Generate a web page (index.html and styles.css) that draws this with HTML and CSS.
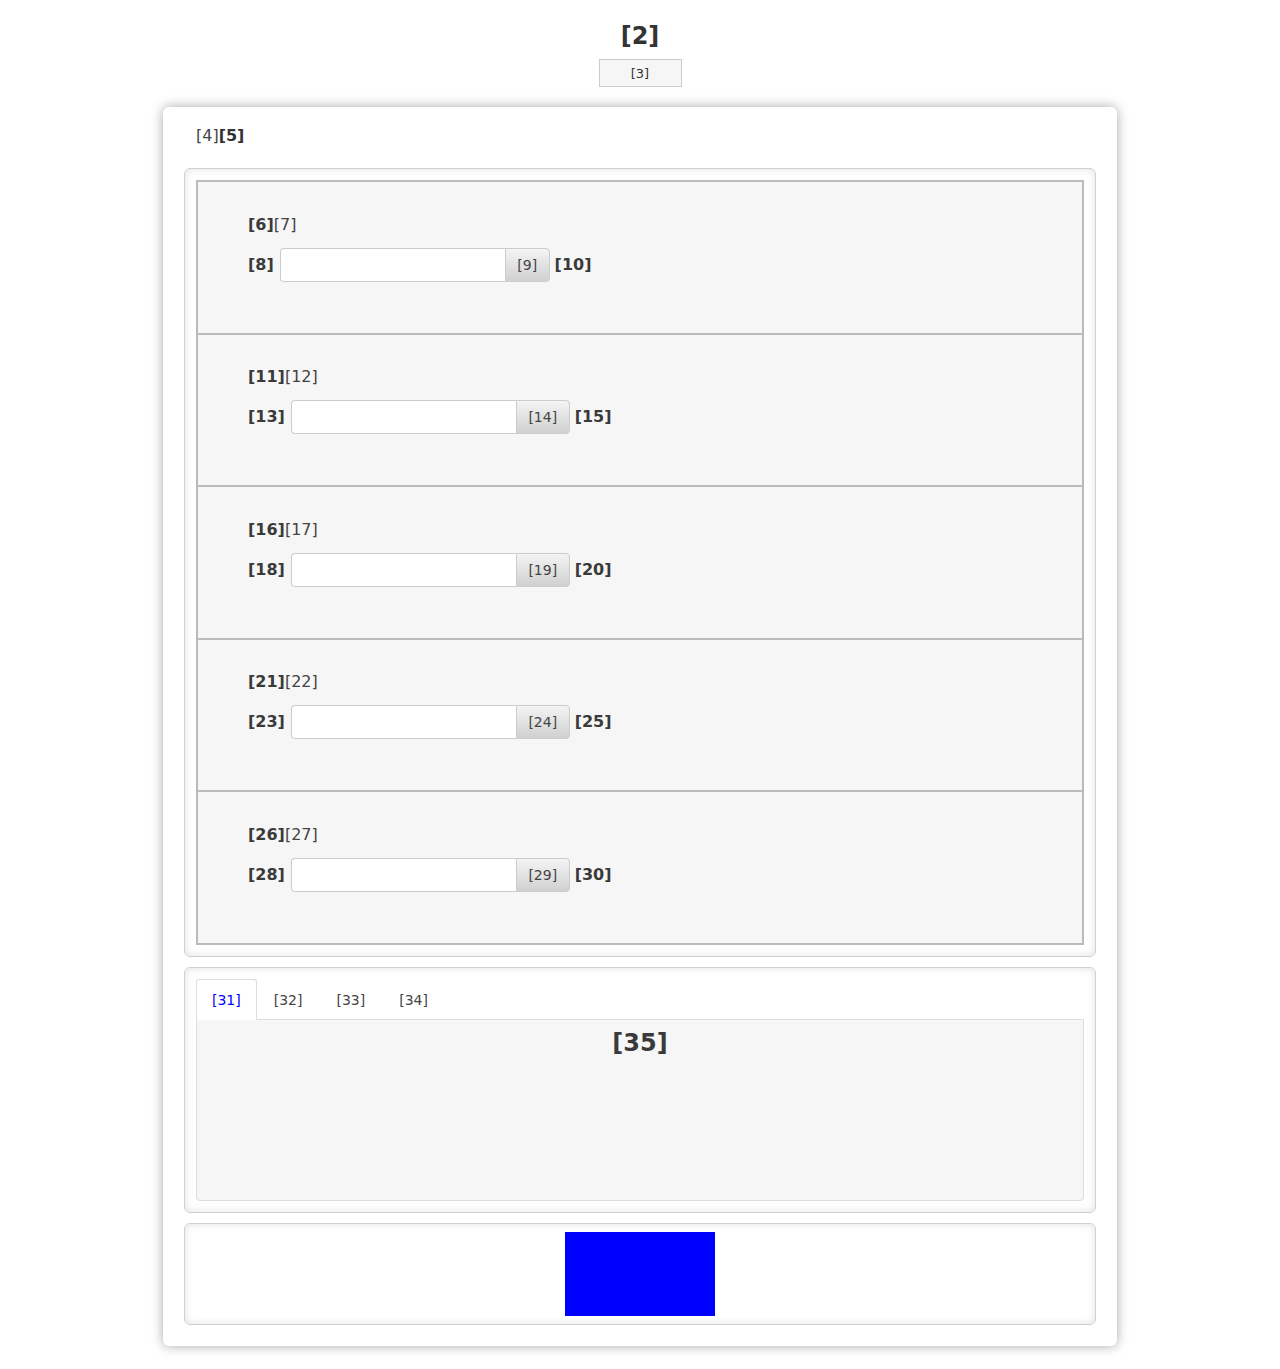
FILE: index.html
```html
<!DOCTYPE html>
<html>
<head>
<meta charset="utf-8">
<link rel="stylesheet" href="styles.css">
</head>
<body>
<header class="top">
  <h1 class="title">[2]</h1>
  <button class="top-btn">[3]</button>
</header>
<main class="card">
  <div class="card-head">[4]<b>[5]</b></div>

  <section class="box rows-box">
    <div class="rows">
      <div class="row">
        <div class="row-label"><b>[6]</b>[7]</div>
        <div class="field"><b>[8]</b><span class="group"><input class="inp" type="text"><button class="gbtn">[9]</button></span><b>[10]</b></div>
      </div>
      <div class="row">
        <div class="row-label"><b>[11]</b>[12]</div>
        <div class="field"><b>[13]</b><span class="group"><input class="inp" type="text"><button class="gbtn">[14]</button></span><b>[15]</b></div>
      </div>
      <div class="row">
        <div class="row-label"><b>[16]</b>[17]</div>
        <div class="field"><b>[18]</b><span class="group"><input class="inp" type="text"><button class="gbtn">[19]</button></span><b>[20]</b></div>
      </div>
      <div class="row">
        <div class="row-label"><b>[21]</b>[22]</div>
        <div class="field"><b>[23]</b><span class="group"><input class="inp" type="text"><button class="gbtn">[24]</button></span><b>[25]</b></div>
      </div>
      <div class="row">
        <div class="row-label"><b>[26]</b>[27]</div>
        <div class="field"><b>[28]</b><span class="group"><input class="inp" type="text"><button class="gbtn">[29]</button></span><b>[30]</b></div>
      </div>
    </div>
  </section>

  <section class="box tabs-box">
    <ul class="tabs">
      <li class="tab active">[31]</li>
      <li class="tab">[32]</li>
      <li class="tab">[33]</li>
      <li class="tab">[34]</li>
    </ul>
    <div class="panel">
      <h2 class="panel-title">[35]</h2>
    </div>
  </section>

  <section class="box media-box">
    <div class="blue"></div>
  </section>
</main>
</body>
</html>
```
FILE: styles.css
```css
* { box-sizing: border-box; }
html, body { margin: 0; padding: 0; background: #fff; }
body {
  font-family: "DejaVu Sans", "Liberation Sans", sans-serif;
  color: #333;
  font-size: 16px;
  padding-top: 22px;
  padding-bottom: 22px;
}
.top {
  display: flex;
  flex-direction: column;
  align-items: center;
}
.title {
  margin: 0;
  font-size: 24px;
  line-height: 28px;
  font-weight: bold;
}
.top-btn {
  margin-top: 9px;
  width: 83px;
  height: 28px;
  background: #f6f6f6;
  border: 1px solid #ccc;
  font-family: inherit;
  font-size: 13px;
  color: #333;
  padding: 0;
}
.card {
  width: 954px;
  margin: 20px auto 0;
  background: #fff;
  border-radius: 6px;
  box-shadow: 0 0 12px rgba(0,0,0,0.35);
  padding: 19px 21px 21px;
}
.card-head {
  padding: 0 12px;
  line-height: 20px;
  margin-bottom: 22px;
  color: #444;
}
.card-head b { color: #333; }
.box {
  border: 1px solid #d0d0d0;
  border-radius: 6px;
  background: #fff;
  box-shadow: inset 0 0 8px rgba(0,0,0,0.12);
  padding: 11px;
  margin-bottom: 10px;
}
.rows-box { padding-bottom: 11px; }
.rows {
  border: 2px solid #bbb;
  background: #f6f6f6;
}
.row {
  height: 152.5px;
  padding: 32.5px 50px 0;
  border-bottom: 2px solid #bbb;
  color: #444;
}
.row:last-child { border-bottom: 0; height: 150.5px; }
.row b { color: #3a3a3a; }
.row-label {
  line-height: 20px;
  height: 20px;
}
.field {
  margin-top: 13px;
  display: flex;
  align-items: center;
  gap: 6px;
  height: 34px;
  line-height: 20px;
}
.field > b:last-child { margin-left: -1px; }
.group {
  display: flex;
  height: 34px;
}
.inp {
  width: 225px;
  height: 34px;
  border: 1px solid #ccc;
  border-right: 0;
  border-radius: 4px 0 0 4px;
  background: #fff;
  margin: 0;
  padding: 0 6px;
  font-family: inherit;
  outline: none;
}
.gbtn {
  height: 34px;
  margin: 0;
  padding: 0 11.5px;
  border: 1px solid #ccc;
  border-radius: 0 4px 4px 0;
  background: linear-gradient(#f4f4f4, #d0d0d0);
  font-family: inherit;
  font-size: 14px;
  color: #444;
}
.tabs-box { padding-bottom: 11px; }
.tabs {
  list-style: none;
  margin: 0;
  padding: 0;
  display: flex;
  font-size: 14px;
  position: relative;
  z-index: 1;
}
.tab {
  height: 41px;
  line-height: 40px;
  padding: 0 16px;
  color: #444;
  border: 1px solid transparent;
  border-bottom: 0;
  border-radius: 3px 3px 0 0;
}
.tab.active {
  color: #0000ff;
  background: #fff;
  border-color: #ddd;
  padding: 0 15px;
}
.panel {
  margin-top: -1px;
  height: 182px;
  background: #f6f6f6;
  border: 1px solid #ddd;
  border-radius: 0 0 4px 4px;
}
.panel-title {
  margin: 0;
  padding-top: 9px;
  text-align: center;
  font-size: 24px;
  line-height: 28px;
  color: #3a3a3a;
}
.media-box {
  padding: 8px 11px;
  margin-bottom: 0;
  display: flex;
  justify-content: center;
}
.blue {
  width: 150px;
  height: 84px;
  background: #0000ff;
}
```
